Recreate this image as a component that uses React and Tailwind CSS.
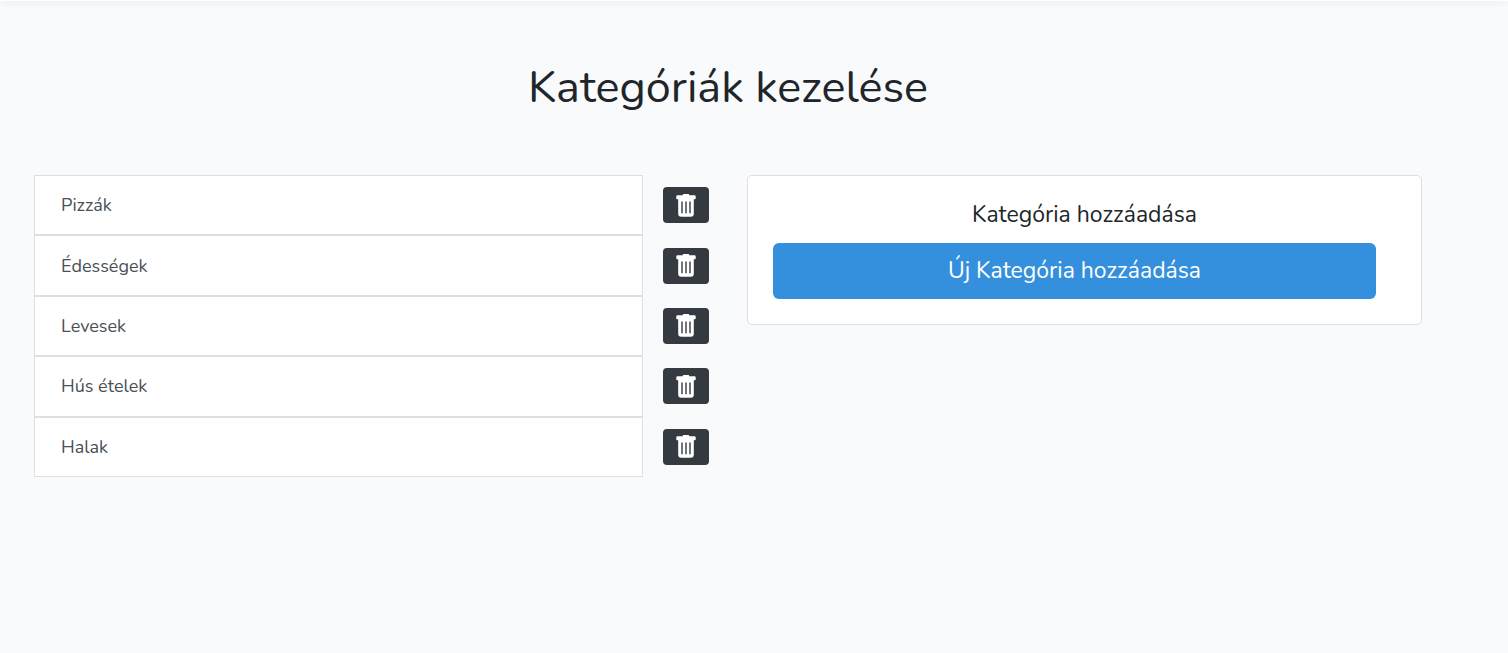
import React from "react";

const categories = ["Pizzák", "Édességek", "Levesek", "Hús ételek", "Halak"];

function TrashIcon() {
  return (
    <svg viewBox="0 0 20 23" className="h-[23px] w-5" fill="currentColor" aria-hidden="true">
      <path d="M7.500 0h5a.7.7 0 0 1 .7.7V1.200H18.500a1.200 1.200 0 0 1 1.200 1.200V4.400a.8.8 0 0 1-.8.8H1.100a.8.8 0 0 1-.8-.8V2.400a1.200 1.200 0 0 1 1.200-1.200H6.800V.7a.7.7 0 0 1 .7-.7z" />
      <path
        fillRule="evenodd"
        d="M2.200 4.500H17.800V19.800a3 3 0 0 1-3 3H5.200a3 3 0 0 1-3-3zM5.300 7.500V19.200H6.700V7.500zM9.300 7.500V19.200H10.700V7.500zM13.300 7.500V19.200H14.700V7.500z"
      />
    </svg>
  );
}

function CategoryRow({ name }) {
  return (
    <li className="flex items-center gap-5">
      <a
        href="#"
        className="flex flex-1 items-center self-stretch border border-[#dfdfdf] bg-white px-[26px] text-[18px] leading-7 text-[#495057]"
      >
        {name}
      </a>
      <button
        type="button"
        aria-label={`${name} törlése`}
        className="flex h-9 w-[46px] items-center justify-center rounded-[4px] bg-[#343a40] text-white"
      >
        <TrashIcon />
      </button>
    </li>
  );
}

export default function App() {
  return (
    <div className="min-h-screen bg-[#f8fafc] font-['Nunito','Lato',sans-serif] text-[#212529]">
      <header className="h-px bg-white shadow-[0_2px_5px_rgba(0,0,0,0.16)]" />
      <main className="pt-[59px] pr-[86px] pl-[34px]">
        <h1 className="text-center text-[45px] leading-14">Kategóriák kezelése</h1>
        <div className="mt-[59px] grid grid-cols-2 items-start gap-[38px]">
          <ul className="grid min-h-[302px] auto-rows-fr">
            {categories.map((name) => (
              <CategoryRow key={name} name={name} />
            ))}
          </ul>
          <section className="rounded-[5px] border border-[#dfdfdf] bg-white p-[25px]">
            <h2 className="text-center text-[23px] leading-7">Kategória hozzáadása</h2>
            <div className="mt-[14px] pr-5">
              <button
                type="button"
                className="h-14 w-full rounded-[6px] bg-[#3490dc] text-[23px] leading-9 text-white"
              >
                Új Kategória hozzáadása
              </button>
            </div>
          </section>
        </div>
      </main>
    </div>
  );
}
